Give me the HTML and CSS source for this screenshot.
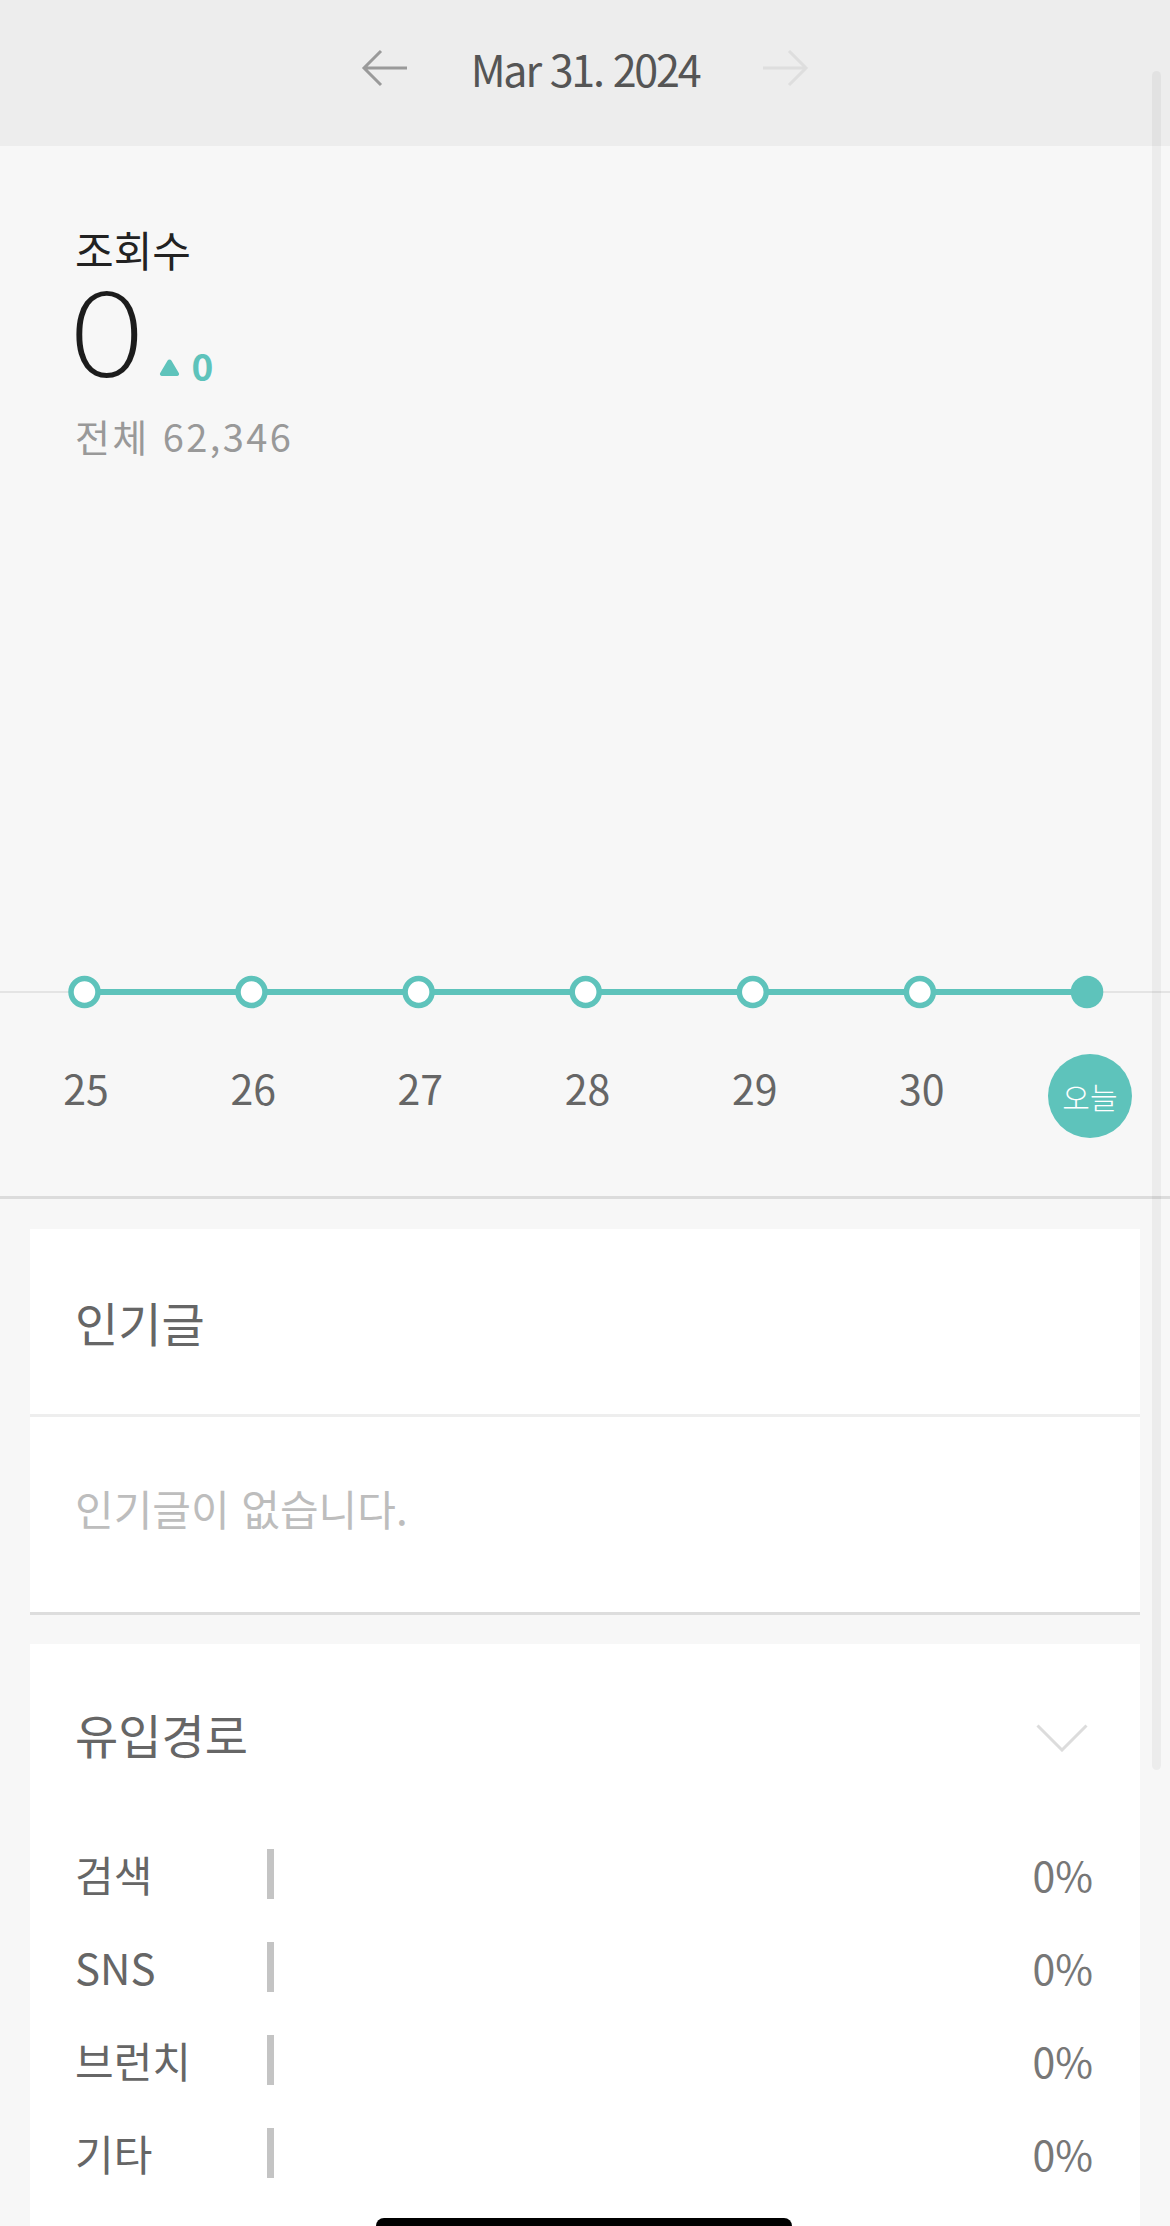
FILE: index.html
```html
<!DOCTYPE html>
<html lang="ko">
<head>
<meta charset="utf-8">
<title>통계</title>
<link rel="stylesheet" href="styles.css">
</head>
<body>
<div class="page">
  <header class="date-bar">
    <svg class="nav-arrow prev" width="46" height="38" viewBox="0 0 46 38"><path d="M46 19H3M20 2L3 19L20 36" fill="none" stroke="currentColor" stroke-width="3"/></svg>
    <span class="date">Mar 31. 2024</span>
    <svg class="nav-arrow next" width="46" height="38" viewBox="0 0 46 38"><path d="M0 19H43M26 2L43 19L26 36" fill="none" stroke="currentColor" stroke-width="3"/></svg>
  </header>

  <section class="stats">
    <div class="stats-head">
      <div class="stat-label">조회수</div>
      <div class="stat-row">
        <span class="stat-value">0</span>
        <span class="stat-delta">
          <svg class="delta-tri" width="21" height="17" viewBox="0 0 21 17"><path d="M8.6 1.6a2.2 2.2 0 0 1 3.8 0l7.4 12.4a2 2 0 0 1-1.7 3H2.9a2 2 0 0 1-1.7-3z" fill="currentColor"/></svg>
          <span class="delta-num">0</span>
        </span>
      </div>
      <div class="stat-total">전체 62,346</div>
    </div>

    <div class="chart">
      <svg class="chart-line" width="1170" height="40" viewBox="0 0 1170 40">
        <line x1="0" y1="20" x2="1170" y2="20" stroke="#e4e4e4" stroke-width="2"/>
        <line x1="84.5" y1="20" x2="1087" y2="20" stroke="#5ec3bb" stroke-width="6"/>
        <circle cx="84.5" cy="20" r="13.5" fill="#fff" stroke="#5ec3bb" stroke-width="5.5"/>
        <circle cx="251.5" cy="20" r="13.5" fill="#fff" stroke="#5ec3bb" stroke-width="5.5"/>
        <circle cx="418.6" cy="20" r="13.5" fill="#fff" stroke="#5ec3bb" stroke-width="5.5"/>
        <circle cx="585.7" cy="20" r="13.5" fill="#fff" stroke="#5ec3bb" stroke-width="5.5"/>
        <circle cx="752.8" cy="20" r="13.5" fill="#fff" stroke="#5ec3bb" stroke-width="5.5"/>
        <circle cx="919.9" cy="20" r="13.5" fill="#fff" stroke="#5ec3bb" stroke-width="5.5"/>
        <circle cx="1087" cy="20" r="16.3" fill="#5ec3bb"/>
      </svg>
      <div class="day-row">
        <span class="day">25</span>
        <span class="day">26</span>
        <span class="day">27</span>
        <span class="day">28</span>
        <span class="day">29</span>
        <span class="day">30</span>
        <span class="day today"><span class="today-badge">오늘</span></span>
      </div>
    </div>
  </section>

  <section class="card popular">
    <div class="card-head">
      <h2 class="card-title">인기글</h2>
    </div>
    <div class="card-empty">인기글이 없습니다.</div>
  </section>

  <section class="card referrer">
    <div class="card-head referrer-head">
      <h2 class="card-title">유입경로</h2>
      <svg class="chevron" width="52" height="28" viewBox="0 0 52 28"><path d="M1.5 1.5L26 26L50.5 1.5" fill="none" stroke="currentColor" stroke-width="3"/></svg>
    </div>
    <ul class="ref-list">
      <li class="ref-row"><span class="ref-name">검색</span><span class="ref-bar"></span><span class="ref-pct">0%</span></li>
      <li class="ref-row"><span class="ref-name">SNS</span><span class="ref-bar"></span><span class="ref-pct">0%</span></li>
      <li class="ref-row"><span class="ref-name">브런치</span><span class="ref-bar"></span><span class="ref-pct">0%</span></li>
      <li class="ref-row"><span class="ref-name">기타</span><span class="ref-bar"></span><span class="ref-pct">0%</span></li>
    </ul>
  </section>

  <div class="scrollbar"></div>
  <div class="home-indicator"></div>
</div>
</body>
</html>
```

FILE: styles.css
```css
* { box-sizing: border-box; }

html, body {
  margin: 0;
  padding: 0;
}

body {
  background: #f7f7f7;
  font-family: "Noto Sans CJK KR", "Noto Sans", sans-serif;
  color: #666;
  height: 2226px;
  overflow: hidden;
}

.page {
  position: relative;
  width: 1170px;
  height: 2226px;
  overflow: hidden;
}

/* header */
.date-bar {
  height: 146px;
  background: #ededed;
  display: flex;
  justify-content: center;
  align-items: center;
  gap: 64px;
  padding-bottom: 10px;
}

.nav-arrow.prev { color: #9a9a9a; }
.nav-arrow.next { color: #dedede; }

.date {
  font-size: 43px;
  line-height: 44px;
  color: #555;
  letter-spacing: -2.2px;
}

/* stats */
.stats {
  height: 1053px;
  display: flex;
  flex-direction: column;
  border-bottom: 3px solid #dcdcdc;
}

.stats-head {
  padding: 82px 75px 0;
}

.stat-label {
  font-size: 42px;
  line-height: 42px;
  color: #222;
}

.stat-row {
  display: flex;
  align-items: baseline;
  margin-top: 3px;
}

.stat-value {
  font-family: Lato, "Noto Sans", sans-serif;
  font-size: 120px;
  line-height: 117px;
  font-weight: 300;
  color: #1c1c1c;
  margin-left: -3px;
}

.stat-delta {
  display: flex;
  align-items: baseline;
  gap: 12px;
  margin-left: 17px;
  color: #5ec3bb;
  position: relative;
  top: 4px;
}

.delta-tri {
  position: relative;
  top: -5px;
}

.delta-num {
  font-size: 37px;
  line-height: 37px;
  font-weight: 700;
}

.stat-total {
  margin-top: 27px;
  font-size: 38px;
  line-height: 38px;
  letter-spacing: 2.4px;
  color: #999;
}

.chart {
  margin-top: auto;
  padding-bottom: 58px;
}

.chart-line {
  display: block;
}

.day-row {
  display: grid;
  grid-template-columns: repeat(7, 1fr);
  margin-top: 42px;
  height: 84px;
}

.day {
  justify-self: center;
  font-size: 41px;
  line-height: 41px;
  color: #666;
  margin-top: 13px;
  margin-left: 5px;
}

.day.today {
  margin-top: 0;
  margin-left: 0;
}

.today-badge {
  display: flex;
  align-items: center;
  justify-content: center;
  width: 84px;
  height: 84px;
  border-radius: 50%;
  background: #5ec3bb;
  color: #fff;
  font-size: 30px;
  line-height: 30px;
  font-weight: 300;
  margin-left: 7px;
}

/* cards */
.card {
  margin: 30px 30px 0;
  background: #fff;
}

.card-head {
  height: 188px;
  display: flex;
  align-items: center;
  padding: 0 45px;
  border-bottom: 3px solid #eeeeee;
}

.card-title {
  margin: 0;
  font-size: 47px;
  line-height: 47px;
  font-weight: 400;
  color: #666;
}

.card-empty {
  height: 198px;
  padding: 70px 45px 0;
  font-size: 42px;
  line-height: 42px;
  color: #bdbdbd;
  border-bottom: 3px solid #dddddd;
}

.referrer {
  margin-top: 29px;
}

.referrer-head {
  height: auto;
  border-bottom: none;
  padding: 66px 52px 0 45px;
  align-items: center;
  justify-content: space-between;
}

.chevron {
  color: #dcdcdc;
  position: relative;
  top: 4px;
}

.ref-list {
  list-style: none;
  margin: 0;
  padding: 92px 47px 120px 45px;
  display: flex;
  flex-direction: column;
  gap: 43px;
}

.ref-row {
  display: flex;
  align-items: center;
  height: 50px;
}

.ref-name {
  width: 192px;
  font-size: 42px;
  line-height: 42px;
  color: #666;
}

.ref-bar {
  width: 7px;
  height: 50px;
  background: #c4c4c4;
}

.ref-pct {
  margin-left: auto;
  font-size: 41px;
  line-height: 41px;
  color: #777;
}

/* overlays */
.scrollbar {
  position: absolute;
  left: 1152px;
  top: 71px;
  width: 9px;
  height: 1699px;
  border-radius: 5px;
  background: rgba(0, 0, 0, 0.045);
}

.home-indicator {
  position: absolute;
  left: 376px;
  bottom: -8px;
  width: 416px;
  height: 16px;
  border-radius: 8px;
  background: #000;
}
```
